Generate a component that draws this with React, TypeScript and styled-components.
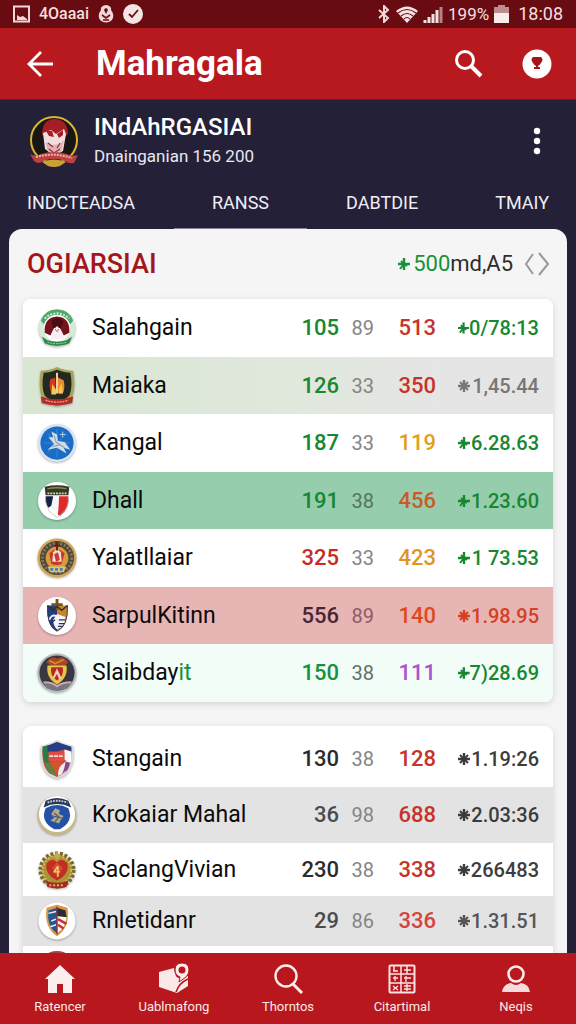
import React from "react";
import styled, { createGlobalStyle } from "styled-components";

const GlobalStyle = createGlobalStyle`
  *, *::before, *::after { box-sizing: border-box; }
  body { margin: 0; background: #242038; font-family: Roboto, "Liberation Sans", sans-serif; }
  button { font: inherit; border: 0; padding: 0; margin: 0; background: none; color: inherit; cursor: pointer; }
`;

const Screen = styled.div`
  display: flex;
  flex-direction: column;
  height: 100vh;
  overflow: hidden;
  background: #242038;
`;

const StatusBar = styled.div`
  display: flex;
  align-items: center;
  flex: none;
  height: 28px;
  padding: 0 13px;
  background: #680c12;
  color: #f5dfdf;
  font-size: 17px;
  line-height: 24px;
  svg { display: block; flex: none; }
`;

const StatusGroup = styled.div<{ $gap: number; $end?: boolean }>`
  display: flex;
  align-items: center;
  gap: ${(p) => p.$gap}px;
  margin-left: ${(p) => (p.$end ? "auto" : "0")};
`;

const StatusLabel = styled.span`
  font-size: 16px;
  font-weight: 500;
`;

const Clock = styled.span`
  font-size: 18px;
  margin-left: 4px;
`;

const AppBar = styled.header`
  display: flex;
  align-items: center;
  flex: none;
  height: 72px;
  padding: 0 24px 0 26px;
  background: #b8191f;
  border-bottom: 1px solid #7c1424;
  color: #fff;
`;

const AppTitle = styled.h1`
  flex: 1;
  margin: 0 0 0 42px;
  font-size: 35px;
  line-height: 40px;
  font-weight: 700;
`;

const IconButton = styled.button`
  display: flex;
  align-items: center;
  justify-content: center;
  flex: none;
  svg { display: block; }
`;

const AppActions = styled.div`
  display: flex;
  align-items: center;
  gap: 39px;
`;

const TeamHeader = styled.section`
  display: flex;
  align-items: center;
  flex: none;
  height: 82px;
  padding: 0 27px 0 29px;
  color: #fff;
`;

const TeamText = styled.div`
  flex: 1;
  margin-left: 15px;
`;

const TeamName = styled.h2`
  margin: 0;
  font-size: 24px;
  line-height: 30px;
  font-weight: 500;
`;

const TeamMeta = styled.p`
  margin: 0;
  font-size: 17px;
  line-height: 28px;
  color: #e9e7f0;
`;

const Tabs = styled.nav`
  display: flex;
  justify-content: space-between;
  flex: none;
  height: 47px;
  padding: 0 27px;
`;

const Tab = styled.button<{ $active?: boolean }>`
  position: relative;
  padding-bottom: 6px;
  color: #f0eef5;
  font-size: 18px;
  line-height: 24px;
  &::after {
    content: "";
    display: ${(p) => (p.$active ? "block" : "none")};
    position: absolute;
    left: -38px;
    right: -38px;
    bottom: 0;
    height: 1px;
    background: #8f7f9c;
  }
`;

const Panel = styled.main`
  flex: 1;
  min-height: 0;
  margin: 0 9px;
  padding: 0 14px;
  overflow-y: auto;
  scrollbar-width: none;
  border-radius: 13px 13px 0 0;
  background: #f5f5f5;
`;

const PanelHeader = styled.div`
  display: flex;
  align-items: center;
  height: 70px;
  padding: 0 3px 0 4px;
`;

const PanelTitle = styled.h3`
  flex: 1;
  margin: 0;
  color: #a5161c;
  font-size: 27px;
  line-height: 32px;
  font-weight: 500;
`;

const Total = styled.span`
  display: flex;
  align-items: center;
  margin-right: 11px;
  color: #2c2c2e;
  font-size: 22px;
  line-height: 28px;
`;

const Positive = styled.span`
  display: inline-flex;
  align-items: center;
  gap: 3px;
  color: #159238;
`;

const Card = styled.div<{ $top: number }>`
  margin-bottom: 24px;
  padding-top: ${(p) => p.$top}px;
  overflow: hidden;
  border-radius: 8px;
  background: #fff;
  box-shadow: 0 2px 7px rgba(0, 0, 0, 0.14);
`;

const Table = styled.table`
  width: 100%;
  table-layout: fixed;
  border-collapse: collapse;
`;

const Row = styled.tr<{ $bg: string; $height: number }>`
  height: ${(p) => p.$height}px;
  background: ${(p) => p.$bg};
`;

const NameCell = styled.th`
  padding: 0 0 0 15px;
  text-align: left;
  font-weight: 400;
  white-space: nowrap;
`;

const NameWrap = styled.div`
  display: flex;
  align-items: center;
  gap: 16px;
  color: #0b0b0b;
  font-size: 23px;
  line-height: 28px;
`;

const NumberCell = styled.td<{ $color: string; $kind: "main" | "minor" | "last" }>`
  padding: 0 ${(p) => (p.$kind === "last" ? 14 : 0)}px 0 0;
  text-align: right;
  white-space: nowrap;
  color: ${(p) => p.$color};
  font-size: ${(p) => (p.$kind === "main" ? 22 : 20)}px;
  font-weight: ${(p) => (p.$kind === "main" ? 500 : 400)};
  line-height: 28px;
`;

const Delta = styled.span`
  display: flex;
  align-items: center;
  justify-content: space-between;
  margin-left: 22px;
  font-weight: 500;
`;

const EmblemSvg = styled.svg`
  display: block;
  flex: none;
  overflow: visible;
  filter: drop-shadow(0 1px 1px rgba(0, 0, 0, 0.3));
`;

const BottomNav = styled.nav`
  display: flex;
  flex: none;
  height: 71px;
  padding: 0 3px;
  background: #b8171d;
`;

const NavItem = styled.button`
  display: flex;
  flex: 1;
  flex-direction: column;
  align-items: center;
  padding-top: 9px;
  color: #fbe9e9;
  font-size: 13px;
  line-height: 16px;
  gap: 3px;
  svg { display: block; }
`;

const emblems: Record<string, React.ReactNode> = {
  salah: (
    <>
      <circle cx="20" cy="20" r="19.5" fill="#d3ead7" />
      <path d="M3 12Q8 0 20 0.500Q32 0 37 12L34 16Q20 4 6 16Z" fill="#4fa869" />
      <path d="M7 10Q20-1 33 10" fill="none" stroke="#d8f2dc" strokeWidth="2" strokeDasharray="2 1.5" />
      <circle cx="20" cy="20" r="14" fill="#fff" />
      <path d="M7 25Q6 9 20 8Q34 9 33 25L27 28L23 20H17L13 28Z" fill="#77131d" />
      <path d="M14 13Q20 6 27 13L24 20H16Z" fill="#4a0c12" />
      <path d="M13 32Q14 23 20 18Q26 23 28 32Z" fill="#f7eef3" />
      <path d="M18 21L20 24L22 21" stroke="#b56a76" fill="none" />
      <path d="M4 29L10 33Q20 36 30 33L36 29L33 36Q20 42 7 36Z" fill="#2e8b47" />
      <path d="M10 35Q20 38 30 35" stroke="#a7d7b1" strokeDasharray="2 1" fill="none" />
    </>
  ),
  maiak: (
    <>
      <path d="M20 0Q28 4 37 4Q40 20 36 32Q29 40 20 41Q11 40 4 32Q0 20 3 4Q12 4 20 0Z" fill="#a8a25a" />
      <path d="M20 3Q28 6 34 6Q37 20 33 30Q27 36 20 37Q13 36 7 30Q3 20 6 6Q12 6 20 3Z" fill="#23291f" />
      <path d="M13 13L18 11L19 28H14Q11 20 13 13Z" fill="#d33a20" />
      <path d="M21 11L27 14Q29 22 26 28H21Z" fill="#e88c2c" />
      <path d="M19 6H21V28H19Z" fill="#f5dca0" />
      <path d="M15 18L19 24V29H14ZM25 17L22 23V28H26Z" fill="#f4c65b" />
      <path d="M3 31Q20 37 37 31L36 38Q20 43 4 38Z" fill="#b42b27" />
      <path d="M8 35Q20 39 32 35" stroke="#efa08c" strokeWidth="1.5" strokeDasharray="2 1" fill="none" />
    </>
  ),
  kangal: (
    <>
      <circle cx="20" cy="20" r="20" fill="#d9e4f3" />
      <circle cx="20" cy="20" r="17.500" fill="#1b6cc4" />
      <path d="M20 5V35M6 20H34M10 10L30 30M30 10L10 30" stroke="#3f88d2" strokeWidth="1" />
      <path d="M14 8L20 11L21 18L28 19L34 27L27 25L30 31L20 25L10 27L17 21L11 14L16 14Z" fill="#d4dce5" />
      <path d="M17 12L19 19L28 25M15 24L23 22" stroke="#8ba3bd" strokeWidth="1.2" fill="none" />
      <path d="M26 8V14M23 11H29" stroke="#b5d3ef" />
    </>
  ),
  dhall: (
    <>
      <circle cx="20" cy="20" r="20" fill="#fff" />
      <path d="M7 5Q20 2 33 5L32 14H8Z" fill="#343827" />
      <path d="M10 7Q20 5 30 7" stroke="#8c8a4c" strokeWidth="1.5" fill="none" />
      <path d="M10 12H31" stroke="#d7d5b4" strokeWidth="2" strokeDasharray="2 1" />
      <path d="M8 15H16L14 25L11 27Q7 22 8 15Z" fill="#182241" />
      <path d="M22 15H32Q34 28 23 36L21 34Z" fill="#df2a2a" />
      <path d="M17 15H22L21 34L14 27Z" fill="#f5f5fa" />
      <path d="M8 15V20Q9 31 20 37Q31 31 32 20V15" fill="none" stroke="#bdbdc4" strokeWidth="0.8" />
    </>
  ),
  yala: (
    <>
      <circle cx="20" cy="20" r="20.5" fill="#d1a65a" />
      <circle cx="20" cy="20" r="18" fill="#4b493b" />
      <circle cx="20" cy="20" r="15.5" fill="none" stroke="#8a7c52" strokeWidth="3" strokeDasharray="2 2" />
      <circle cx="20" cy="20" r="12" fill="#d99a3c" />
      <path d="M12 15Q20 7 28 15L25 26Q20 29 14 26Z" fill="#c23a2c" />
      <path d="M16 14L20 10L24 14L25 24H15Z" fill="#f2ded0" />
      <path d="M17 16L21 14L23 22L19 24Z" fill="#cb3937" />
      <path d="M20 3V12M17 7H23" stroke="#6e1917" strokeWidth="2" />
      <path d="M10 29H30L27 35H13Z" fill="#dec66f" />
      <path d="M13 32H27" stroke="#497dba" strokeWidth="3" strokeDasharray="3 2" />
    </>
  ),
  sarp: (
    <>
      <circle cx="20" cy="20" r="20" fill="#fff" />
      <path d="M10 9H20V36Q9 31 10 9Z" fill="#203e80" />
      <path d="M20 9H31Q32 30 20 36Z" fill="#c6842e" />
      <path d="M20 2V14M14 8H26" stroke="#715520" strokeWidth="3" />
      <path d="M16 24L20 18L29 21Q29 31 20 34Q16 31 16 24Z" fill="#f4f4f7" />
      <path d="M12 24Q14 18 19 20M13 28L18 24M22 24H29M22 28H28M21 31H26" stroke="#203262" strokeWidth="1.3" fill="none" />
      <path d="M12 24Q14 18 19 20" stroke="#f4f4f7" strokeWidth="2" fill="none" />
      <path d="M10 9L16 14L20 10L25 14L31 9" fill="none" stroke="#392d28" strokeWidth="1.5" />
      <path d="M10 9Q9 31 20 36Q32 31 31 9" fill="none" stroke="#343447" />
    </>
  ),
  slai: (
    <>
      <circle cx="20" cy="20" r="20.5" fill="#b4bac1" />
      <circle cx="20" cy="20" r="18.500" fill="#393840" />
      <path d="M9 9Q14 1 20 5Q27 1 32 9L27 13H14Z" fill="#aa4622" />
      <path d="M12 7L18 10L27 6" stroke="#c98a35" strokeWidth="2" fill="none" />
      <path d="M10 12H30Q32 25 20 32Q8 25 10 12Z" fill="#e4c64b" />
      <path d="M14 14H26Q28 23 20 28Q12 23 14 14Z" fill="#b62824" />
      <path d="M20 15L25 26H22L20 21L17 26H15Z" fill="#f1cfae" />
      <path d="M5 29Q13 28 20 33Q28 28 36 29L31 36Q20 40 9 36Z" fill="#777685" />
      <path d="M6 30Q14 29 20 34Q27 29 35 30" stroke="#d9a9a5" strokeWidth="2" fill="none" />
    </>
  ),
  stan: (
    <>
      <path d="M20 0Q29 5 37 6Q40 28 29 37L20 41L11 37Q0 28 3 6Q11 5 20 0Z" fill="#d8dedc" />
      <path d="M20 2Q28 6 35 7Q37 27 28 35L20 39L12 35Q3 27 5 7Q12 6 20 2Z" fill="#d94631" />
      <path d="M5 7L12 5V24H7Q4 14 5 7Z" fill="#287d46" />
      <path d="M10 6L20 2L35 7V12L28 10L20 12H10Z" fill="#263f84" />
      <path d="M28 10L35 12Q36 20 34 25L27 20Z" fill="#fafafa" />
      <path d="M11 13H28V22H11Z" fill="#de5046" />
      <path d="M12 17H26" stroke="#f8dcd8" strokeWidth="2" strokeDasharray="4 1" />
      <path d="M7 24H14L20 38L12 35Q8 30 7 24Z" fill="#628043" />
      <path d="M30 22Q20 27 21 38L28 35L34 25Z" fill="#eeeaf0" />
      <path d="M29 23Q28 31 25 36L31 31L34 24Z" fill="#7c4a8c" />
      <path d="M14 24Q21 22 28 24Q21 28 20 34Q16 31 14 24Z" fill="#d6542d" />
    </>
  ),
  krok: (
    <>
      <circle cx="20" cy="20.500" r="20.5" fill="#c8b986" />
      <circle cx="20" cy="19" r="19" fill="#fff" />
      <path d="M8 5Q20 -1 32 5L35 12Q20 5 6 12Z" fill="#283959" />
      <path d="M10 7Q20 3 31 7" stroke="#bfc6d2" strokeWidth="2" strokeDasharray="2 1" fill="none" />
      <path d="M8 13Q20 6 32 13Q38 27 23 35H17Q2 27 8 13Z" fill="#2451a5" />
      <path d="M18 13L23 15L22 19L27 21L24 25L22 29L17 27L13 26L17 23L14 19Z" fill="#b6aa86" />
      <path d="M17 18L22 22L18 27M14 21L25 23" stroke="#4d6382" strokeWidth="1.4" fill="none" />
    </>
  ),
  sac: (
    <>
      <circle cx="20" cy="20" r="16" fill="#ad9338" />
      <circle cx="20" cy="20" r="17.5" fill="none" stroke="#796820" strokeWidth="4" strokeDasharray="3 2" />
      <circle cx="20" cy="20" r="15" fill="none" stroke="#d4b955" strokeWidth="2" strokeDasharray="2 2" />
      <path d="M20 0L23 6L20 10L17 6Z" fill="#c9a847" />
      <path d="M9 13Q15 6 20 12Q25 6 31 13Q33 25 20 31Q7 25 9 13Z" fill="#c42d22" />
      <path d="M20 12L15 18L20 28L26 18Z" fill="#d4502b" />
      <path d="M21 16L17 22H23M21 16V27" stroke="#f5cf7a" strokeWidth="1.5" fill="none" />
      <path d="M8 31Q20 36 32 31L30 38Q20 41 10 38Z" fill="#a22b24" />
      <path d="M12 36H28" stroke="#e0b75f" strokeWidth="2" strokeDasharray="2 2" />
    </>
  ),
  rnl: (
    <>
      <circle cx="20" cy="20" r="19.5" fill="#fff" />
      <path d="M20 3L31 6Q34 27 20 36Q6 27 9 6Z" fill="#d99844" />
      <path d="M11 9L20 6V33Q9 26 11 9Z" fill="#215893" />
      <path d="M20 6L29 9L30 16L20 15Z" fill="#292b36" />
      <path d="M20 15L30 16Q29 27 20 33Z" fill="#f7f5f5" />
      <path d="M21 18L30 23M21 24L27 28" stroke="#c53037" strokeWidth="2.5" />
      <path d="M11 12L19 10M14 20L19 18M13 26L19 24" stroke="#e7edf5" strokeWidth="1.5" />
      <path d="M20 5V34" stroke="#923238" strokeWidth="1.5" />
    </>
  ),
  last: (
    <>
      <circle cx="20" cy="20" r="19" fill="#a9434a" />
      <circle cx="20" cy="20" r="16" fill="#7c2028" />
    </>
  ),
};

const Emblem = ({ id }: { id: string }) => (
  <EmblemSvg width="38" height="38" viewBox="0 0 40 40" aria-hidden="true">
    {emblems[id]}
  </EmblemSvg>
);

/* Trend mark in front of a value: a heavy plus with short diagonal spurs. */
const TrendMark = ({ full }: { full?: boolean }) => (
  <svg width="12" height="14" viewBox="0 0 12 14" fill="none" stroke="currentColor" aria-hidden="true">
    <path d="M6 1V13M0 7H12" strokeWidth="2.400" />
    <path d={full ? "M2 3L10 11M10 3L2 11" : "M6 7L2 12M3 4L6 7L9 9"} strokeWidth="2" />
  </svg>
);

const TeamLogo = () => (
  <svg width="50" height="54" viewBox="0 0 50 54" aria-hidden="true">
    <circle cx="25" cy="26" r="23" fill="#191716" stroke="#d8b82d" strokeWidth="2" />
    <path d="M13 21Q13 5 26 5Q39 6 39 20L34 24H17Z" fill="#a61e25" />
    <path d="M14 19L22 16L27 20L35 15L37 20L34 37L25 42L16 35Z" fill="#f1dfe0" />
    <path d="M17 17L20 22L25 23L23 17ZM34 16L28 20L30 24L34 21Z" fill="#a61b25" />
    <path d="M17 28L23 31L31 30L35 26L32 38L25 42L18 36Z" fill="#e0b0b4" />
    <path d="M19 29L24 33M31 29L28 34M20 35L25 39L31 35" stroke="#8e3038" strokeWidth="1.2" fill="none" />
    <path d="M1 40Q7 43 12 40Q25 36 38 40Q43 43 49 41L45 49Q39 50 36 47Q25 43 14 47Q10 51 5 47Z" fill="#bb4240" />
    <path d="M7 43Q25 38 43 44" fill="none" stroke="#f0b1a5" strokeWidth="2" strokeDasharray="2 1" />
    <path d="M13 48Q25 43 37 48L31 52Q25 54 19 52Z" fill="#c9a331" />
  </svg>
);

interface Team {
  id: string;
  name: React.ReactNode;
  played: string;
  minor: string;
  score: string;
  delta: string;
  colors: [string, string, string, string];
  bg: string;
  height: number;
}

const green = "#178732";
const grey = "#858585";
const red = "#c5332b";
const ink = "#3c3c3e";
const white = "#ffffff";
const shade = "#e3e3e3";

const leaders: Team[] = [
  { id: "salah", name: "Salahgain", played: "105", minor: "89", score: "513", delta: "0/78:13", colors: [green, grey, red, green], bg: white, height: 58 },
  { id: "maiak", name: "Maiaka", played: "126", minor: "33", score: "350", delta: "1,45.44", colors: [green, grey, red, "#777777"], bg: "linear-gradient(90deg, #d8e6d2, #e0e8dc 50%, #e5e5e5 80%)", height: 57 },
  { id: "kangal", name: "Kangal", played: "187", minor: "33", score: "119", delta: "6.28.63", colors: [green, grey, "#e0a020", green], bg: white, height: 58 },
  { id: "dhall", name: "Dhall", played: "191", minor: "38", score: "456", delta: "1.23.60", colors: [green, "#55745f", "#c95a2c", green], bg: "#96cdad", height: 57 },
  { id: "yala", name: "Yalatllaiar", played: "325", minor: "33", score: "423", delta: "1 73.53", colors: ["#c52d24", grey, "#e0951f", green], bg: white, height: 58 },
  { id: "sarp", name: "SarpulKitinn", played: "556", minor: "89", score: "140", delta: "1.98.95", colors: ["#472632", "#8d5c66", "#dc4a20", "#d53f22"], bg: "#e8b5b5", height: 57 },
  { id: "slai", name: <span>Slaibday<Positive>it</Positive></span>, played: "150", minor: "38", score: "111", delta: "7)28.69", colors: ["#16913d", "#607169", "#ad50d1", green], bg: "#f2fdf8", height: 58 },
];

const followers: Team[] = [
  { id: "stan", name: "Stangain", played: "130", minor: "38", score: "128", delta: "1.19:26", colors: ["#2b2b2d", grey, red, ink], bg: white, height: 57 },
  { id: "krok", name: "Krokaiar Mahal", played: "36", minor: "98", score: "688", delta: "2.03:36", colors: ["#4b4b4d", grey, red, ink], bg: shade, height: 56 },
  { id: "sac", name: "SaclangVivian", played: "230", minor: "38", score: "338", delta: "266483", colors: ["#2b2b2d", grey, red, ink], bg: white, height: 53 },
  { id: "rnl", name: "Rnletidanr", played: "29", minor: "86", score: "336", delta: "1.31.51", colors: ["#4b4b4d", grey, "#d3443e", "#555557"], bg: shade, height: 50 },
  { id: "last", name: "", played: "", minor: "", score: "", delta: "", colors: [ink, grey, red, ink], bg: white, height: 46 },
];

const Standings = ({ teams, label, top }: { teams: Team[]; label: string; top: number }) => (
  <Card $top={top}>
    <Table aria-label={label}>
      <colgroup>
        <col />
        <col style={{ width: 50 }} />
        <col style={{ width: 35 }} />
        <col style={{ width: 62 }} />
        <col style={{ width: 117 }} />
      </colgroup>
      <tbody>
        {teams.map((t) => (
          <Row key={t.id} $bg={t.bg} $height={t.height}>
            <NameCell scope="row">
              <NameWrap>
                <Emblem id={t.id} />
                <span>{t.name}</span>
              </NameWrap>
            </NameCell>
            <NumberCell $kind="main" $color={t.colors[0]}>{t.played}</NumberCell>
            <NumberCell $kind="minor" $color={t.colors[1]}>{t.minor}</NumberCell>
            <NumberCell $kind="main" $color={t.colors[2]}>{t.score}</NumberCell>
            <NumberCell $kind="last" $color={t.colors[3]}>
              {t.delta && (
                <Delta>
                  <TrendMark full={t.colors[3] !== green} />
                  <span>{t.delta}</span>
                </Delta>
              )}
            </NumberCell>
          </Row>
        ))}
      </tbody>
    </Table>
  </Card>
);

export default function App() {
  return (
    <Screen>
      <GlobalStyle />
      <StatusBar>
        <StatusGroup $gap={8}>
          <svg width="18" height="18" viewBox="0 0 18 18">
            <rect x="1" y="1.500" width="15" height="15" fill="none" stroke="#f1d7d8" strokeWidth="2" />
            <path d="M4 10L7 12L10 11L14 14V15H4Z" fill="#f1d7d8" />
          </svg>
          <StatusLabel>4Oaaai</StatusLabel>
          <svg width="18" height="20" viewBox="0 0 18 20">
            <path d="M9 1Q15 2 14 6Q18 11 15 16Q9 21 3 16Q0 11 4 6Q3 2 9 1Z" fill="#f1d7d8" />
            <path d="M9 4Q12 5 10 8L9 10L8 8Q6 5 9 4Z" fill="#680c12" />
            <path d="M5 11L9 14L13 11M6 16H12" stroke="#680c12" strokeWidth="1.6" fill="none" />
          </svg>
          <svg width="20" height="20" viewBox="0 0 20 20">
            <circle cx="10" cy="10" r="10" fill="#f5e6e6" />
            <path d="M6 10L9 13L15 6" stroke="#680c12" strokeWidth="1.8" fill="none" />
          </svg>
        </StatusGroup>
        <StatusGroup $gap={5} $end>
          <svg width="14" height="18" viewBox="0 0 14 18">
            <path d="M2 5L11 13L7 17V1L11 5L2 13" fill="none" stroke="#f1d7d8" strokeWidth="2" />
          </svg>
          <svg width="22" height="17" viewBox="0 0 22 17">
            <path d="M0 5Q11-4 22 5L11 17Z" fill="#f5e3e3" />
            <path d="M2 7Q11 0 20 7M5 10Q11 5 17 10M8 13Q11 10 14 13" stroke="#680c12" strokeWidth="1.1" fill="none" />
          </svg>
          <svg width="20" height="17" viewBox="0 0 20 17">
            <path d="M2 17V14M6 17V11M10 17V8M14 17V4" stroke="#f5e3e3" strokeWidth="3" />
            <path d="M18 17V1" stroke="#b98386" strokeWidth="3" />
          </svg>
          <span>199%</span>
          <svg width="15" height="18" viewBox="0 0 15 18">
            <path d="M0 2H4V0H11V2H15V8H0Z" fill="#bd8c8f" />
            <rect y="8" width="15" height="10" fill="#f8ecec" />
          </svg>
          <Clock>18:08</Clock>
        </StatusGroup>
      </StatusBar>

      <AppBar>
        <IconButton aria-label="Back">
          <svg width="28" height="28" viewBox="0 0 28 28" fill="none" stroke="#fff" strokeWidth="2.800">
            <path d="M15 2L3 14L15 26M3 14H27" />
          </svg>
        </IconButton>
        <AppTitle>Mahragala</AppTitle>
        <AppActions>
          <IconButton aria-label="Search">
            <svg width="29" height="29" viewBox="0 0 29 29" fill="none" stroke="#fff">
              <circle cx="11" cy="11" r="8.500" strokeWidth="3" />
              <path d="M17 17L27 27" strokeWidth="4" />
            </svg>
          </IconButton>
          <IconButton aria-label="Trophy">
            <svg width="30" height="30" viewBox="0 0 30 30">
              <circle cx="15" cy="15" r="14.500" fill="#fff" />
              <path d="M11 8H19Q22 10 19 14Q18 16 16 17V18H18V20H12V18H14V17Q12 16 11 14Q8 10 11 8Z" fill="#a3161c" />
            </svg>
          </IconButton>
        </AppActions>
      </AppBar>

      <TeamHeader>
        <TeamLogo />
        <TeamText>
          <TeamName>INdAhRGASIAI</TeamName>
          <TeamMeta>Dnainganian 156 200</TeamMeta>
        </TeamText>
        <IconButton aria-label="More options">
          <svg width="24" height="30" viewBox="0 0 24 30" fill="#fff">
            <circle cx="12" cy="5" r="3.200" />
            <circle cx="12" cy="15" r="3.200" />
            <circle cx="12" cy="25" r="3.200" />
          </svg>
        </IconButton>
      </TeamHeader>

      <Tabs>
        <Tab>INDCTEADSA</Tab>
        <Tab $active>RANSS</Tab>
        <Tab>DABTDIE</Tab>
        <Tab>TMAIY</Tab>
      </Tabs>

      <Panel>
        <PanelHeader>
          <PanelTitle>OGIARSIAI</PanelTitle>
          <Total>
            <Positive><TrendMark />500</Positive>
            <span>md,A5</span>
          </Total>
          <IconButton aria-label="Previous or next">
            <svg width="26" height="24" viewBox="0 0 26 24" fill="none" stroke="#999" strokeWidth="2">
              <path d="M9 2L2 12L9 22M15 1L24 12L15 23" />
            </svg>
          </IconButton>
        </PanelHeader>
        <Standings teams={leaders} label="Leaders" top={0} />
        <Standings teams={followers} label="Followers" top={4} />
      </Panel>

      <BottomNav>
        <NavItem>
          <svg width="32" height="34" viewBox="0 0 32 34">
            <path d="M16 3L31 17H28V31H19V22H13V31H4V17H1Z" fill="#fdeeee" />
          </svg>
          Ratencer
        </NavItem>
        <NavItem>
          <svg width="34" height="34" viewBox="0 0 34 34">
            <path d="M2 10L17 6Q18 16 22 16L31 14V24L20 31L2 25Z" fill="#fbe9e9" />
            <path d="M19 30Q22 21 31 17" stroke="#b8171d" strokeWidth="1.500" fill="none" />
            <path d="M25 1Q32 1 32 8Q32 12 29 15L22 20L23 15Q18 13 18 8Q18 1 25 1Z" fill="#fdeeee" stroke="#b8171d" />
            <circle cx="25" cy="8" r="3.500" fill="#b8171d" />
          </svg>
          Uablmafong
        </NavItem>
        <NavItem>
          <svg width="32" height="34" viewBox="0 0 32 34" fill="none" stroke="#fdeeee">
            <circle cx="14" cy="14" r="10.500" strokeWidth="2.400" />
            <path d="M21 22L30 31" strokeWidth="3" />
          </svg>
          Thorntos
        </NavItem>
        <NavItem>
          <svg width="30" height="34" viewBox="0 0 30 34" fill="none" stroke="#fbe3e3">
            <rect x="2.500" y="3.500" width="25" height="27" rx="1" strokeWidth="2" />
            <path d="M14 4V30M3 12H27M3 21H27M7 4V9M20 4V12" strokeWidth="1.500" />
            <path d="M6 16H11M8 14V19M17 16H24M19 14V20M6 24L11 28M11 24L6 28M17 24H24M17 27H24M20 22V29M6 9H11M17 8H24" strokeWidth="1.300" />
          </svg>
          Citartimal
        </NavItem>
        <NavItem>
          <svg width="30" height="34" viewBox="0 0 30 34">
            <circle cx="15" cy="12" r="7.500" fill="none" stroke="#fdeeee" strokeWidth="2.600" />
            <path d="M1 30Q2 22 10 21Q15 25 20 21Q28 22 29 30Z" fill="#f9dada" />
          </svg>
          Neqis
        </NavItem>
      </BottomNav>
    </Screen>
  );
}
